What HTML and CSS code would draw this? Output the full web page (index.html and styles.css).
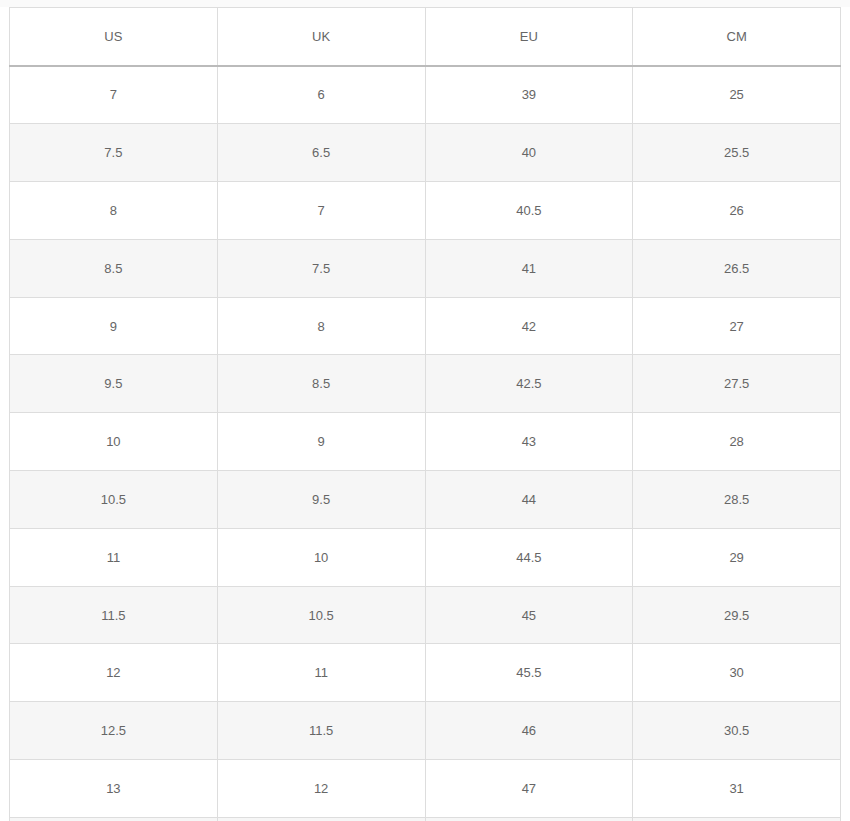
FILE: index.html
```html
<!DOCTYPE html>
<html>
<head>
<meta charset="utf-8">
<link rel="stylesheet" href="styles.css">
</head>
<body>
<div class="wrap">
<table class="size-table">
  <thead>
    <tr><th>US</th><th>UK</th><th>EU</th><th>CM</th></tr>
  </thead>
  <tbody>
    <tr><td>7</td><td>6</td><td>39</td><td>25</td></tr>
    <tr><td>7.5</td><td>6.5</td><td>40</td><td>25.5</td></tr>
    <tr><td>8</td><td>7</td><td>40.5</td><td>26</td></tr>
    <tr><td>8.5</td><td>7.5</td><td>41</td><td>26.5</td></tr>
    <tr><td>9</td><td>8</td><td>42</td><td>27</td></tr>
    <tr><td>9.5</td><td>8.5</td><td>42.5</td><td>27.5</td></tr>
    <tr><td>10</td><td>9</td><td>43</td><td>28</td></tr>
    <tr><td>10.5</td><td>9.5</td><td>44</td><td>28.5</td></tr>
    <tr><td>11</td><td>10</td><td>44.5</td><td>29</td></tr>
    <tr><td>11.5</td><td>10.5</td><td>45</td><td>29.5</td></tr>
    <tr><td>12</td><td>11</td><td>45.5</td><td>30</td></tr>
    <tr><td>12.5</td><td>11.5</td><td>46</td><td>30.5</td></tr>
    <tr><td>13</td><td>12</td><td>47</td><td>31</td></tr>
    <tr><td>13.5</td><td>12.5</td><td>47.5</td><td>31.5</td></tr>
  </tbody>
</table>
</div>
</body>
</html>
```

FILE: styles.css
```css
html, body {
  margin: 0;
  padding: 0;
  background: #fff;
}
body {
  font-family: "Liberation Sans", Arial, sans-serif;
  font-size: 13px;
  color: #666;
}
.wrap {
  padding: 7px 9px 0 9px;
  background: linear-gradient(#fafafa, #fafafa) top / 100% 7px no-repeat;
}
.size-table {
  width: 832px;
  border-collapse: collapse;
  table-layout: fixed;
  background: #fff;
}
.size-table th,
.size-table td {
  border: 1px solid #ddd;
  text-align: center;
  vertical-align: middle;
  font-weight: normal;
  padding: 0;
  height: 56.8px;
}
.size-table th {
  border-bottom: 2px solid #bbb;
  height: 56.5px;
}
.size-table tbody tr:nth-child(even) td {
  background: #f6f6f6;
}
```
